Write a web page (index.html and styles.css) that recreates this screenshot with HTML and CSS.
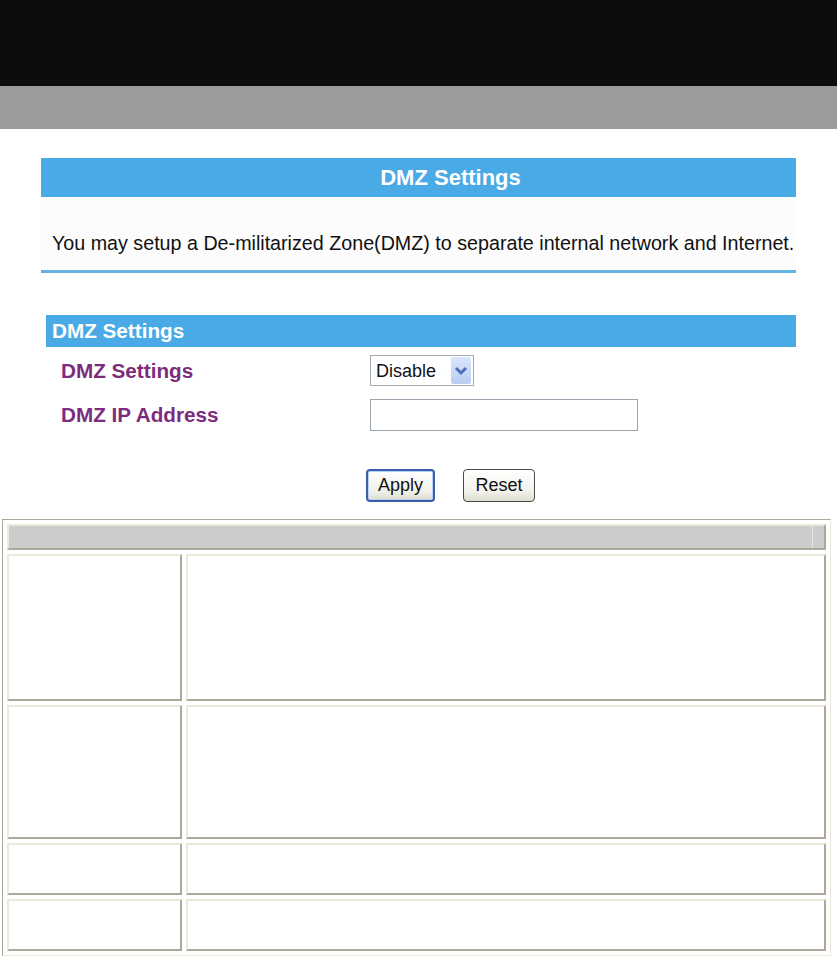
FILE: index.html
```html
<!DOCTYPE html>
<html>
<head>
  <meta charset="UTF-8">
  <title>DMZ Settings</title>
  <link rel="stylesheet" href="styles.css">
</head>
<body>
  <div class="top-bar"></div>
  <div class="sub-bar"></div>

  <div class="content">
    <div class="page-title">DMZ Settings</div>

    <div class="page-desc">
      You may setup a De-militarized Zone(DMZ) to separate internal network and Internet.
    </div>

    <!-- DMZ form -->
    <div class="section-bar">DMZ Settings</div>

    <div class="form-grid">
      <div class="field-label">DMZ Settings</div>
      <div class="field">
        <label class="select-box">
          <select class="select-input">
            <option selected>Disable</option>
            <option>Enable</option>
          </select>
          <span class="select-arrow">
            <svg width="14" height="10" viewBox="0 0 14 10">
              <path d="M2 2 L7 7 L12 2" fill="none" stroke="#4d6fb8" stroke-width="3"/>
            </svg>
          </span>
        </label>
      </div>

      <div class="field-label">DMZ IP Address</div>
      <div class="field">
        <input type="text" class="text-input">
      </div>
    </div>

    <div class="buttons">
      <button class="btn btn-default">Apply</button>
      <button class="btn btn-reset">Reset</button>
    </div>
  </div>

  <!-- Help table -->
  <table class="help-table">
    <tr class="help-head">
      <th colspan="2"><div class="head-fill"><span class="head-end"></span></div></th>
    </tr>
    <tr class="row-tall">
      <td class="help-key"></td>
      <td class="help-val"></td>
    </tr>
    <tr class="row-mid">
      <td class="help-key"></td>
      <td class="help-val"></td>
    </tr>
    <tr class="row-short">
      <td class="help-key"></td>
      <td class="help-val"></td>
    </tr>
    <tr class="row-short">
      <td class="help-key"></td>
      <td class="help-val"></td>
    </tr>
  </table>
</body>
</html>
```

FILE: styles.css
```css
:root {
  --title-blue: #4aaae6;
  --line-blue: #62b4e2;
  --label-purple: #7d2c7d;
  --cell-light: #ece9d8;
  --cell-dark: #aca899;
}

body {
  margin: 0;
  background: #fff;
  font-family: 'Liberation Sans', Arial, sans-serif;
  color: #111;
}

/* Top bands */
.top-bar {
  height: 86px;
  background-color: #0d0d0d;
}

.sub-bar {
  height: 43px;
  background-color: #9b9b9b;
}

.content {
  margin: 0 41px;
  padding-top: 29px;
}

.page-title {
  height: 39px;
  line-height: 39px;
  background-color: var(--title-blue);
  color: #fff;
  font-size: 22px;
  font-weight: bold;
  text-align: center;
  padding-left: 64px;
}

.page-desc {
  height: 38px;
  padding: 35px 0 0 11px;
  font-size: 19.7px;
  line-height: 22px;
  white-space: nowrap;
  background-color: #fcfcfc;
  border-bottom: 3px solid var(--line-blue);
}

/* Form section */
.section-bar {
  margin: 42px 0 0 5px;
  height: 32px;
  line-height: 31px;
  padding-left: 6px;
  background-color: var(--title-blue);
  color: #fff;
  font-size: 20.7px;
  font-weight: bold;
}

.form-grid {
  display: grid;
  grid-template-columns: 329px 1fr;
  row-gap: 13px;
  margin-top: 8px;
  align-items: center;
}

.field-label {
  padding-left: 20px;
  font-size: 20.7px;
  font-weight: bold;
  color: var(--label-purple);
}

.select-box {
  display: inline-flex;
  align-items: center;
  width: 104px;
  height: 31px;
  box-sizing: border-box;
  border: 1px solid #a5acb2;
  background: #fff;
  padding: 1px 2px 1px 0;
}

.select-input {
  appearance: none;
  -webkit-appearance: none;
  border: none;
  background: transparent;
  font-family: inherit;
  font-size: 18px;
  color: #111;
  padding: 0 0 0 5px;
  width: 76px;
  outline: none;
}

.select-arrow {
  display: flex;
  align-items: center;
  justify-content: center;
  width: 20px;
  height: 27px;
  margin-left: auto;
  background: linear-gradient(180deg, #d8e4fa 0%, #b9cdf3 100%);
  border-radius: 2px;
}

.text-input {
  display: block;
  width: 268px;
  height: 32px;
  box-sizing: border-box;
  border: 1px solid #9aa5b0;
  font-size: 18px;
  padding: 2px 4px;
}

.buttons {
  display: flex;
  gap: 28px;
  padding-left: 325px;
  margin-top: 38px;
}

.btn {
  height: 33px;
  padding: 0 8px;
  font-family: inherit;
  font-size: 18px;
  color: #111;
  background: linear-gradient(180deg, #ffffff 0%, #f1f1ea 70%, #dcdccf 100%);
  border: 1px solid #4a4a4a;
  border-radius: 4px;
  cursor: pointer;
}

.btn-default {
  border: 2px solid #3c5eaa;
  box-shadow: inset 0 0 0 1px #b9cff5;
  width: 69px;
}

.btn-reset {
  width: 72px;
}

/* Help table */
.help-table {
  margin: 17px 0 0 2px;
  width: 829px;
  border-collapse: separate;
  border-spacing: 4px;
  border: 1px solid;
  border-color: var(--cell-dark) var(--cell-light) var(--cell-light) var(--cell-dark);
}

.help-table th,
.help-table td {
  padding: 0;
  border: 2px solid;
  border-color: var(--cell-light) var(--cell-dark) var(--cell-dark) var(--cell-light);
  box-sizing: border-box;
}

.help-head {
  height: 26px;
}

.help-head th {
  background-color: #cccccc;
}

.head-fill {
  display: flex;
  height: 22px;
}

.head-end {
  margin-left: auto;
  width: 11px;
  border-left: 1px solid #e6e6e6;
}

.help-key {
  width: 175px;
}

.row-tall {
  height: 147px;
}

.row-mid {
  height: 134px;
}

.row-short {
  height: 52px;
}
```
